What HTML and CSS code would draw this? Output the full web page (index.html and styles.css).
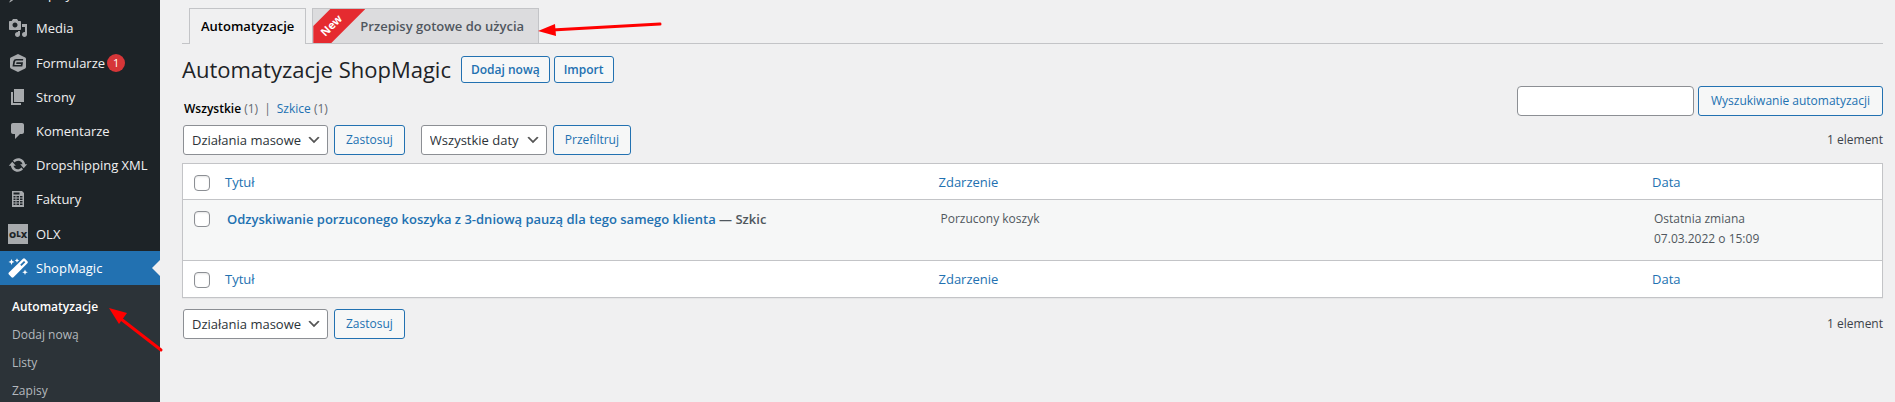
FILE: index.html
```html
<!DOCTYPE html>
<html lang="pl">
<head>
  <meta charset="UTF-8">
  <meta name="viewport" content="width=device-width, initial-scale=1.0">
  <title>Automatyzacje ShopMagic</title>
  <link rel="stylesheet" href="styles.css">
</head>
<body>
  <nav class="sidebar">
    <ul class="menu">
      <li>
        <a class="menu-link" href="#">
          <svg class="icon" viewBox="0 0 20 20"><path d="M10.44 3.02l1.82-1.82 6.36 6.35-1.83 1.82c-1.05-.68-2.48-.57-3.41.36l-.75.75c-.92.93-1.04 2.35-.35 3.41l-1.83 1.82-2.41-2.41-2.8 2.79c-.42.42-3.38 2.71-3.8 2.29s1.86-3.39 2.28-3.81l2.79-2.79L4.1 9.36l1.83-1.82c1.05.69 2.48.57 3.4-.36l.75-.75c.93-.92 1.05-2.35.36-3.41z"/></svg>
          Wpisy
        </a>
      </li>
      <li>
        <a class="menu-link" href="#">
          <svg class="icon" viewBox="0 0 20 20"><path d="M13 11V4c0-.55-.45-1-1-1h-1.67L9 1H5L3.67 3H2c-.55 0-1 .45-1 1v7c0 .55.45 1 1 1h10c.55 0 1-.45 1-1zM7 4.5c1.38 0 2.5 1.12 2.5 2.5S8.38 9.5 7 9.5 4.5 8.38 4.5 7 5.62 4.5 7 4.5zM14 6h5v10.5c0 1.38-1.12 2.5-2.5 2.5S14 17.88 14 16.5s1.12-2.5 2.5-2.5c.17 0 .34.02.5.05V9h-3V6zm-4 8.05V13h2v3.5c0 1.38-1.12 2.5-2.5 2.5S7 17.88 7 16.5 8.12 14 9.5 14c.17 0 .34.02.5.05z"/></svg>
          Media
        </a>
      </li>
      <li>
        <a class="menu-link tall" href="#">
          <svg class="icon" viewBox="0 0 20 20"><path fill-rule="evenodd" d="M10 1l7.2 3.6q.8.4.8 1.3v8.2q0 .9-.8 1.3L10 19l-7.2-3.6q-.8-.4-.8-1.3V5.9q0-.9.8-1.3zM15.2 6H8.3Q5.900 6 5.300 8.300L4.500 13.500H14.300L15 9.300H8.500L8.200 11H13l-.2 1H6.400l.6-3.300Q7.300 7.600 8.500 7.600H15z"/></svg>
          Formularze <span class="badge">1</span>
        </a>
      </li>
      <li>
        <a class="menu-link" href="#">
          <svg class="icon" viewBox="0 0 20 20"><path d="M6 15V2h10v13H6zm-1 1h8v2H3V5h2v11z"/></svg>
          Strony
        </a>
      </li>
      <li>
        <a class="menu-link" href="#">
          <svg class="icon" viewBox="0 0 20 20"><path d="M5 2h9c1.1 0 2 .9 2 2v7c0 1.1-.9 2-2 2h-2l-5 5v-5H5c-1.1 0-2-.9-2-2V4c0-1.1.9-2 2-2z"/></svg>
          Komentarze
        </a>
      </li>
      <li>
        <a class="menu-link" href="#">
          <svg class="icon" viewBox="0 0 20 20"><path d="M10.2 3.28c3.53 0 6.43 2.61 6.92 6h2.08l-3.5 4-3.5-4h2.32c-.45-1.97-2.21-3.45-4.32-3.45-1.45 0-2.73.71-3.54 1.78L4.95 5.66C6.23 4.2 8.11 3.28 10.2 3.28zm-.4 13.44c-3.52 0-6.43-2.61-6.92-6H.8l3.5-4c1.17 1.33 2.33 2.67 3.5 4H5.48c.45 1.97 2.21 3.45 4.32 3.45 1.45 0 2.73-.71 3.54-1.78l1.71 1.95c-1.28 1.46-3.15 2.38-5.25 2.38z"/></svg>
          Dropshipping XML
        </a>
      </li>
      <li>
        <a class="menu-link" href="#">
          <svg class="icon" viewBox="0 0 20 20"><path fill-rule="evenodd" d="M4 2h10l2 2v14H4zM5.500 3.500v2h6v-2zM5.500 7v1.500h2V7zm3 0v1.500h2.500V7zm3.500 0v1.500h2.500V7zM5.500 9.500V11h2V9.500zm3 0V11h2.500V9.500zm3.500 0V11h2.500V9.500zM5.500 12v1.500h2V12zm3 0v1.500h2.500V12zm3.500 0v1.500h2.500V12zM5.500 14.500V16h2v-1.500zm3 0V16h2.500v-1.500zm3.500 0V16h2.500v-1.500z"/></svg>
          Faktury
        </a>
      </li>
      <li>
        <a class="menu-link tall" href="#">
          <svg class="icon" viewBox="0 0 20 20"><rect width="20" height="20"/><text class="olx" x="1" y="14">O<tspan class="olx-small" dy="-1">L</tspan><tspan dy="1">X</tspan></text></svg>
          OLX
        </a>
      </li>
      <li>
        <a class="menu-link current" href="#">
          <svg class="icon" viewBox="0 0 20 20"><path fill-rule="evenodd" d="M15 .8q1-.9 2 0l2.400 2.400q.9 1 0 2L5.500 19.200q-1 .9-2 0L.9 16.600q-.9-1 0-2zM16 3l-3.800 3.800 1.300 1.300L17.300 4.300zM3.500.9l.9 2.100 2.100.9-2.100.9-.9 2.100-.9-2.100L.5 3.900 2.600 3zM9 .3l.7 1.500 1.500.7-1.500.7L9 4.700l-.7-1.500-1.500-.7 1.500-.7zM17 11.500l.8 2 2 .8-2 .8-.8 2-.8-2-2-.8 2-.8z"/></svg>
          ShopMagic
        </a>
        <ul class="submenu">
          <li><a class="active" href="#">Automatyzacje</a></li>
          <li><a href="#">Dodaj nową</a></li>
          <li><a href="#">Listy</a></li>
          <li><a href="#">Zapisy</a></li>
        </ul>
      </li>
    </ul>
  </nav>

  <main class="content">
    <nav class="tabs">
      <a class="tab tab-active" href="#">Automatyzacje</a>
      <a class="tab tab-new" href="#"><span class="ribbon"><span class="ribbon-text">New</span></span>Przepisy gotowe do użycia</a>
    </nav>

    <header class="heading">
      <h1>Automatyzacje ShopMagic</h1>
      <a class="title-action" href="#">Dodaj nową</a>
      <a class="title-action" href="#">Import</a>
    </header>

    <div class="filters">
      <ul class="views">
        <li><a class="view-current" href="#">Wszystkie</a> (1)</li>
        <li class="divider">|</li>
        <li><a href="#">Szkice</a> (1)</li>
      </ul>
      <form class="search">
        <input class="search-input" type="search" aria-label="Wyszukiwanie automatyzacji">
        <button class="button" type="button">Wyszukiwanie automatyzacji</button>
      </form>
    </div>

    <div class="tablenav">
      <div class="actions">
        <select class="select select-bulk" aria-label="Działania masowe"><option>Działania masowe</option></select>
        <button class="button" type="button">Zastosuj</button>
      </div>
      <div class="actions">
        <select class="select select-dates" aria-label="Wszystkie daty"><option>Wszystkie daty</option></select>
        <button class="button" type="button">Przefiltruj</button>
      </div>
      <span class="count">1 element</span>
    </div>

    <table class="list">
      <thead>
        <tr>
          <th class="check"><input class="checkbox" type="checkbox" aria-label="Zaznacz wszystko"></th>
          <th><a href="#">Tytuł</a></th>
          <th><a href="#">Zdarzenie</a></th>
          <th class="date"><a href="#">Data</a></th>
        </tr>
      </thead>
      <tbody>
        <tr>
          <td class="check"><input class="checkbox" type="checkbox" aria-label="Zaznacz automatyzację"></td>
          <td><strong><a href="#">Odzyskiwanie porzuconego koszyka z 3-dniową pauzą dla tego samego klienta</a> — Szkic</strong></td>
          <td>Porzucony koszyk</td>
          <td>Ostatnia zmiana<br>07.03.2022 o 15:09</td>
        </tr>
      </tbody>
      <tfoot>
        <tr>
          <th class="check"><input class="checkbox" type="checkbox" aria-label="Zaznacz wszystko"></th>
          <th><a href="#">Tytuł</a></th>
          <th><a href="#">Zdarzenie</a></th>
          <th><a href="#">Data</a></th>
        </tr>
      </tfoot>
    </table>

    <div class="tablenav tablenav-bottom">
      <div class="actions">
        <select class="select select-bulk" aria-label="Działania masowe"><option>Działania masowe</option></select>
        <button class="button" type="button">Zastosuj</button>
      </div>
      <span class="count">1 element</span>
    </div>
  </main>

  <!-- red pointer arrows over the page -->
  <svg class="pointer pointer-tab" viewBox="0 0 124 16"><path d="M122 3L14 9" stroke="#f00" stroke-width="3" stroke-linecap="round"/><path d="M0 10L17 3l1 12z" fill="#f00"/></svg>
  <svg class="pointer pointer-menu" viewBox="0 0 56 46"><path d="M52 42L12 11" stroke="#f00" stroke-width="3" stroke-linecap="round"/><path d="M0 0l18 5-8 11z" fill="#f00"/></svg>
</body>
</html>
```
FILE: styles.css
```css
:root {
  --blue: #2271b1;
  --dark: #1d2327;
  --darker: #2c3338;
  --page: #f0f0f1;
  --line: #c3c4c7;
  --text: #3c434a;
}
* {
  box-sizing: border-box;
}
body {
  margin: 0;
  display: flex;
  height: 100vh;
  overflow: hidden;
  background: var(--page);
  color: var(--text);
  font: 12px/18px "Open Sans", "Noto Sans", sans-serif;
}
a {
  color: var(--blue);
  text-decoration: none;
}
ul {
  list-style: none;
  margin: 0;
  padding: 0;
}

/* sidebar */
.sidebar {
  flex: 0 0 160px;
  background: var(--dark);
  overflow: hidden;
}
.menu {
  margin-top: -23px;
}
.menu-link {
  display: flex;
  align-items: center;
  height: 34px;
  padding-left: 8px;
  color: #f0f0f1;
  font-size: 13px;
  white-space: nowrap;
}
.menu-link.tall {
  height: 35px;
}
.icon {
  flex: none;
  width: 20px;
  height: 20px;
  margin-right: 8px;
  fill: #a7aaad;
}
.olx {
  fill: var(--dark);
  font: 900 9px "Open Sans", sans-serif;
}
.olx-small {
  font-size: 8px;
}
.badge {
  width: 18px;
  margin-left: 2px;
  border-radius: 9px;
  background: #d63638;
  color: #fff;
  font-size: 11px;
  line-height: 18px;
  text-align: center;
}
.menu-link.current {
  position: relative;
  background: var(--blue);
  color: #fff;
}
.menu-link.current .icon {
  fill: #fff;
}
.menu-link.current::after {
  content: "";
  position: absolute;
  right: 0;
  top: 9px;
  border: 8px solid transparent;
  border-left-width: 0;
  border-right-color: var(--page);
}
.submenu {
  padding: 8px 0;
  background: var(--darker);
}
.submenu a {
  display: block;
  padding: 0 12px;
  color: #b4b9be;
  line-height: 28px;
}
.submenu .active {
  color: #fff;
  font-weight: 600;
}

/* tabs */
.content {
  flex: 1;
  padding: 8px 12px 0 22px;
}
.tabs {
  display: flex;
  gap: 6px;
  padding-left: 7px;
  border-bottom: 1px solid var(--line);
}
.tab {
  padding: 5px 11px;
  border: 1px solid var(--line);
  border-bottom: 0;
  background: #dcdcde;
  color: #50575e;
  font-size: 13px;
  font-weight: 600;
  line-height: 24px;
}
.tab-active {
  margin-bottom: -1px;
  padding-bottom: 6px;
  background: var(--page);
  color: #000;
}
.tab-new {
  position: relative;
  padding-left: 47px;
  padding-right: 14px;
}
.ribbon {
  position: absolute;
  left: 0;
  top: 0;
  width: 52px;
  height: 34px;
  display: flex;
  background: #e52b30;
  clip-path: polygon(0 17px, 17px 0, 52px 0, 18px 34px, 0 34px);
}
.ribbon-text {
  width: 38px;
  color: #fff;
  font-size: 11px;
  font-weight: 700;
  line-height: 32px;
  text-align: center;
  transform: rotate(-45deg);
}

/* page title */
.heading {
  display: flex;
  align-items: center;
  gap: 4px;
  margin-top: 11px;
}
h1 {
  margin: 0 6px 0 0;
  color: var(--dark);
  font-size: 22px;
  font-weight: 400;
  line-height: 28px;
}
.title-action {
  padding: 0 9px;
  border: 1px solid var(--blue);
  border-radius: 3px;
  background: #f6f7f7;
  font-weight: 600;
  line-height: 25px;
}

/* filters and actions */
.filters {
  display: flex;
  justify-content: space-between;
  align-items: flex-end;
  margin-top: 3px;
}
.views {
  display: flex;
  gap: 6px;
  padding-left: 2px;
  color: #646970;
  line-height: 15px;
}
.view-current {
  color: #000;
  font-weight: 600;
}
.search,
.actions {
  display: flex;
}
.search {
  gap: 4px;
}
.actions {
  gap: 6px;
  margin-right: 16px;
}
.search-input {
  width: 177px;
  height: 30px;
  border: 1px solid #8c8f94;
  border-radius: 4px;
  background: #fff;
}
.button {
  height: 30px;
  padding: 0 11px;
  border: 1px solid var(--blue);
  border-radius: 3px;
  background: #f6f7f7;
  color: var(--blue);
  font: inherit;
}
.search .button {
  padding: 0 12px;
}
.tablenav {
  display: flex;
  align-items: center;
  padding-left: 1px;
  margin: 9px 0 8px;
}
.tablenav-bottom {
  margin-top: 11px;
}
.select {
  height: 30px;
  padding: 0 24px 0 8px;
  border: 1px solid #8c8f94;
  border-radius: 3px;
  appearance: none;
  background: #fff url("data:image/svg+xml,%3Csvg xmlns='http://www.w3.org/2000/svg' viewBox='0 0 20 20'%3E%3Cpath d='M5 6l5 5 5-5 2 1-7 7-7-7 2-1z' fill='%23555'/%3E%3C/svg%3E") no-repeat right 5px center / 16px 16px;
  color: #2c3338;
  font: inherit;
  font-size: 13px;
}
.select-bulk {
  width: 145px;
}
.select-dates {
  width: 126px;
}
.count {
  margin-left: auto;
}

/* list table */
.list {
  width: 100%;
  table-layout: fixed;
  border: 1px solid var(--line);
  border-spacing: 0;
  background: #fff;
  box-shadow: 0 1px 1px rgba(0, 0, 0, 0.04);
}
.list th {
  padding: 8px;
  font-size: 13px;
  font-weight: 400;
  line-height: 20px;
  text-align: left;
}
.list thead th {
  padding-bottom: 7px;
}
.list td {
  height: 62px;
  padding: 9px 10px;
  border: solid var(--line);
  border-width: 1px 0;
  background: #f6f7f7;
  color: #50575e;
  line-height: 20px;
  vertical-align: top;
}
.list .check {
  width: 34px;
  padding-left: 11px;
  padding-right: 0;
}
.list .date {
  width: 238px;
}
.list strong {
  font-size: 13px;
  font-weight: 600;
}
.checkbox {
  display: block;
  width: 16px;
  height: 16px;
  margin: 2px 0 0;
  border: 1px solid #8c8f94;
  border-radius: 4px;
  appearance: none;
  background: #fff;
  box-shadow: inset 0 1px 2px rgba(0, 0, 0, 0.1);
}

/* pointers */
.pointer {
  position: absolute;
  fill: none;
}
.pointer-tab {
  left: 538px;
  top: 21px;
  width: 124px;
}
.pointer-menu {
  left: 109px;
  top: 308px;
  width: 56px;
}
```
